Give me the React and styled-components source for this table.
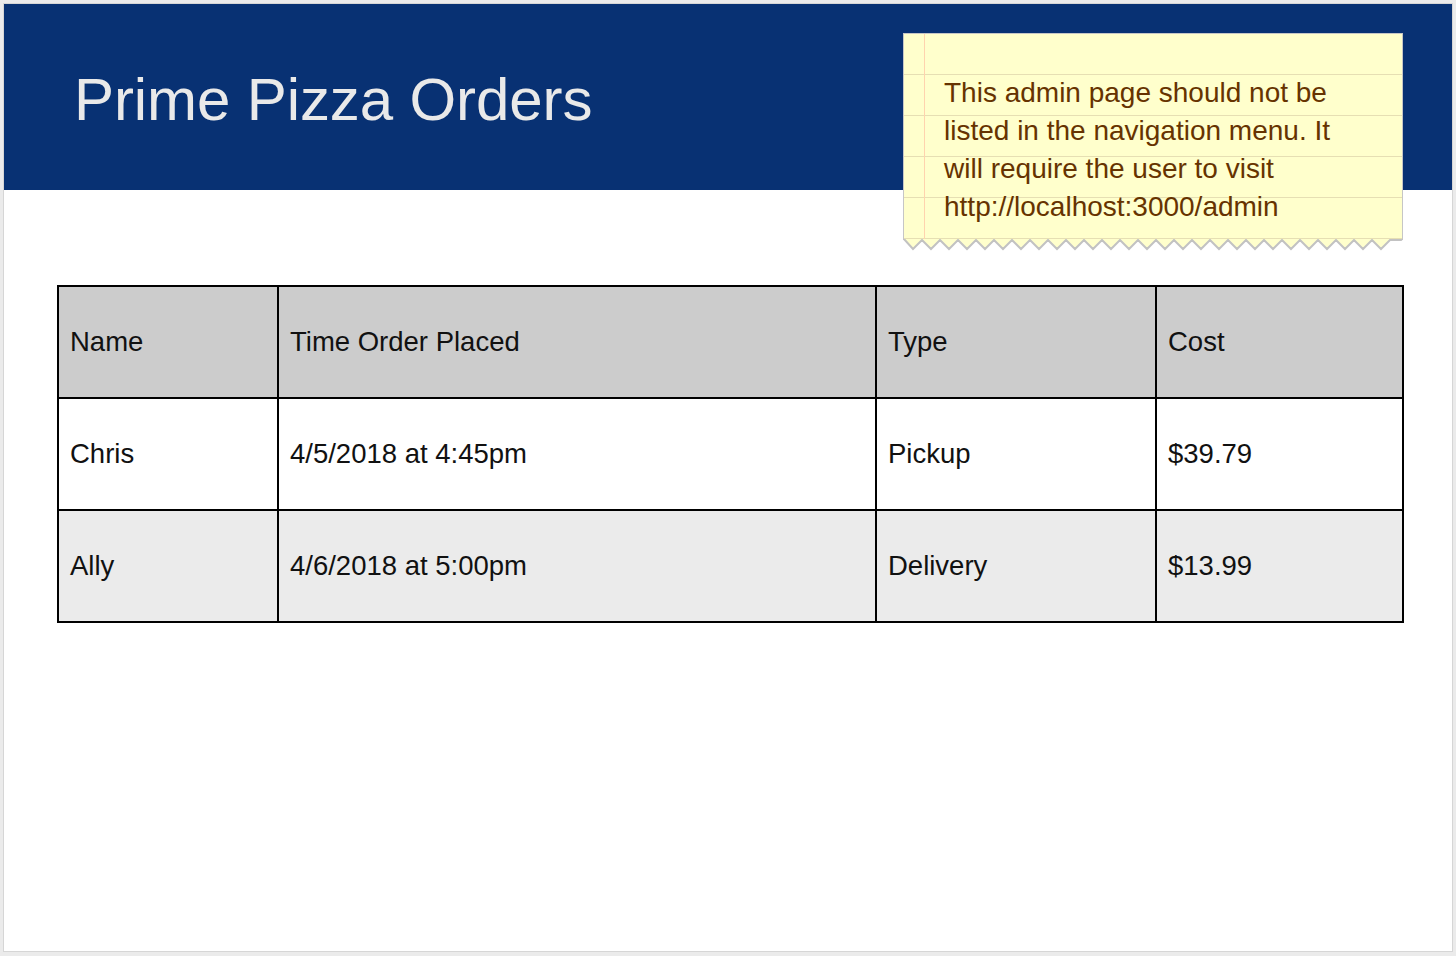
import React from "react";
import styled, { createGlobalStyle } from "styled-components";

const GlobalStyle = createGlobalStyle`
  html, body {
    margin: 0;
    padding: 0;
    background: #ebebeb;
  }
  body {
    padding: 3px 3px 4px 3px;
    font-family: "Liberation Sans", Arial, Helvetica, sans-serif;
  }
`;

const Frame = styled.div`
  position: relative;
  height: 947px;
  background: #ffffff;
  border: 1px solid #d6d6d6;
`;

const Header = styled.header`
  height: 186px;
  box-sizing: border-box;
  background: #083173;
  display: flex;
  align-items: center;
  padding: 5px 0 0 70px;
`;

const Title = styled.h1`
  margin: 0;
  font-size: 60px;
  font-weight: normal;
  color: #e9e9e9;
  letter-spacing: -0.1px;
`;

const Note = styled.aside`
  position: absolute;
  top: 29px;
  left: 899px;
  width: 500px;
`;

const NoteBody = styled.div`
  border: 1px solid #c6c6c6;
  border-bottom: none;
  padding: 40px 0 0 40px;
  box-sizing: border-box;
  height: 207px;
  background-color: #ffffcc;
  background-image:
    linear-gradient(90deg, transparent 20px, #ffd3ae 20px, #ffd3ae 21px, transparent 21px),
    repeating-linear-gradient(180deg, transparent 0, transparent 40px, #e6dfb3 40px, #e6dfb3 41px);
  font-size: 28px;
  line-height: 38px;
  color: #663300;
`;

const Zigzag = styled.svg`
  display: block;
  width: 500px;
  height: 13px;
  margin-top: -1px;
`;

const Content = styled.main`
  padding: 95px 0 0 53px;
`;

const Table = styled.table`
  border-collapse: collapse;
  table-layout: fixed;
  width: 1345px;
  font-size: 27.5px;
  color: #111;
`;

const Row = styled.tr`
  height: 112px;
  background: ${(p) => p.$bg};
`;

const Cell = styled.td`
  border: 2px solid #000;
  padding: 0 0 0 11px;
  text-align: left;
  font-weight: normal;
  vertical-align: middle;
`;

const HeadCell = styled(Cell).attrs({ as: "th" })``;

const columns = [
  { label: "Name", w: 220 },
  { label: "Time Order Placed", w: 598 },
  { label: "Type", w: 280 },
  { label: "Cost", w: 247 },
];

const orders = [
  { name: "Chris", time: "4/5/2018 at 4:45pm", type: "Pickup", cost: "$39.79" },
  { name: "Ally", time: "4/6/2018 at 5:00pm", type: "Delivery", cost: "$13.99" },
];

function zigzagPoints() {
  const pts = ["1,0"];
  const step = 18;
  let x = 1;
  while (x + step <= 490) {
    pts.push(`${x + step / 2},10`);
    pts.push(`${x + step},1`);
    x += step;
  }
  pts.push("498,1", "499,0");
  return pts.join(" ");
}

export default function App() {
  return (
    <>
      <GlobalStyle />
      <Frame>
        <Header>
          <Title>Prime Pizza Orders</Title>
        </Header>

        <Note>
          <NoteBody>
            This admin page should not be
            <br />
            listed in the navigation menu. It
            <br />
            will require the user to visit
            <br />
            http://localhost:3000/admin
          </NoteBody>
          <Zigzag viewBox="0 0 500 13">
            <polyline
              points={zigzagPoints()}
              fill="#ffffcc"
              stroke="#c2c2c2"
              strokeWidth="2"
              strokeLinejoin="miter"
            />
          </Zigzag>
        </Note>

        <Content>
          <Table>
            <colgroup>
              {columns.map((c) => (
                <col key={c.label} style={{ width: c.w }} />
              ))}
            </colgroup>
            <thead>
              <Row $bg="#cccccc">
                {columns.map((c) => (
                  <HeadCell key={c.label}>{c.label}</HeadCell>
                ))}
              </Row>
            </thead>
            <tbody>
              {orders.map((o, i) => (
                <Row key={o.name} $bg={i % 2 ? "#ebebeb" : "#ffffff"}>
                  <Cell>{o.name}</Cell>
                  <Cell>{o.time}</Cell>
                  <Cell>{o.type}</Cell>
                  <Cell>{o.cost}</Cell>
                </Row>
              ))}
            </tbody>
          </Table>
        </Content>
      </Frame>
    </>
  );
}
